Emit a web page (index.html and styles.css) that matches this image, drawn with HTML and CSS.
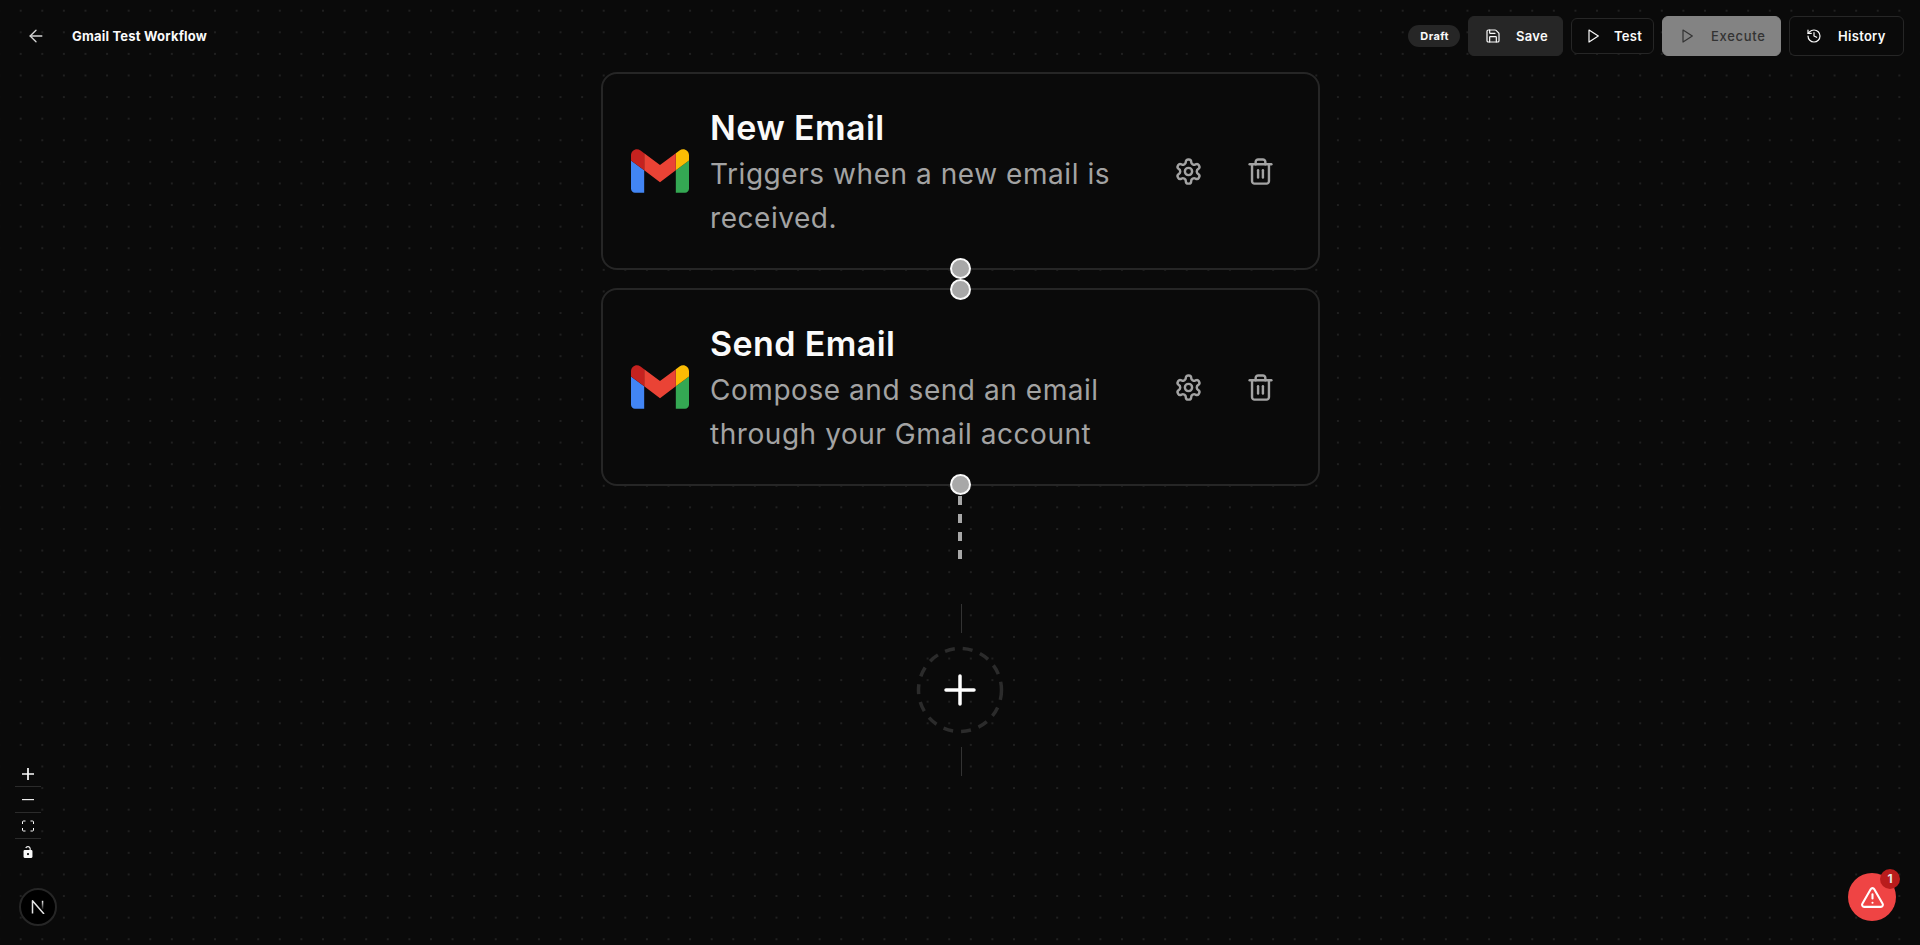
FILE: index.html
```html
<!DOCTYPE html>
<html lang="en">
<head>
  <meta charset="UTF-8" />
  <meta name="viewport" content="width=device-width, initial-scale=1.0"/>
  <title>Gmail Test Workflow</title>
  <link rel="stylesheet" href="styles.css">
</head>
<body>
  <div class="canvas">
    <header class="topbar">
      <div class="topbar-left">
        <svg class="back-icon" viewBox="0 0 24 24"><path d="m12 19-7-7 7-7"/><path d="M19 12H5"/></svg>
        <span class="workflow-name">Gmail Test Workflow</span>
      </div>
      <div class="topbar-right">
        <span class="badge">Draft</span>
        <button class="btn btn-save" type="button">
          <svg viewBox="0 0 24 24"><path d="M15.2 3a2 2 0 0 1 1.4.6l3.8 3.8a2 2 0 0 1 .6 1.4V19a2 2 0 0 1-2 2H5a2 2 0 0 1-2-2V5a2 2 0 0 1 2-2z"/><path d="M17 21v-7a1 1 0 0 0-1-1H8a1 1 0 0 0-1 1v7"/><path d="M7 3v4a1 1 0 0 0 1 1h7"/></svg>
          Save
        </button>
        <button class="btn btn-test" type="button">
          <svg viewBox="0 0 24 24"><polygon points="6 3 20 12 6 21 6 3"/></svg>
          Test
        </button>
        <button class="btn btn-execute" type="button">
          <svg viewBox="0 0 24 24"><polygon points="6 3 20 12 6 21 6 3"/></svg>
          Execute
        </button>
        <button class="btn btn-history" type="button">
          <svg viewBox="0 0 24 24"><path d="M3 12a9 9 0 1 0 9-9 9.75 9.75 0 0 0-6.74 2.74L3 8"/><path d="M3 3v5h5"/><path d="M12 7v5l4 2"/></svg>
          History
        </button>
      </div>
    </header>

    <div class="node node-first">
      <svg class="gmail-logo" viewBox="52 42 88 66"><path fill="#4285f4" d="M58 108h14V74L52 59v43c0 3.32 2.69 6 6 6"/><path fill="#34a853" d="M120 108h14c3.32 0 6-2.69 6-6V59l-20 15"/><path fill="#fbbc04" d="M120 48v26l20-15v-8c0-7.42-8.47-11.65-14.4-7.2"/><path fill="#ea4335" d="M72 74V48l24 18 24-18v26L96 92"/><path fill="#c5221f" d="M52 51v8l20 15V48l-5.6-4.2c-5.94-4.45-14.4-.22-14.4 7.2"/></svg>
      <div class="node-text">
        <h3>New Email</h3>
        <p>Triggers when a new email is received.</p>
      </div>
      <div class="node-actions">
        <svg viewBox="0 0 24 24"><path d="M12.22 2h-.44a2 2 0 0 0-2 2v.18a2 2 0 0 1-1 1.73l-.43.25a2 2 0 0 1-2 0l-.15-.08a2 2 0 0 0-2.73.73l-.22.38a2 2 0 0 0 .73 2.73l.15.1a2 2 0 0 1 1 1.72v.51a2 2 0 0 1-1 1.74l-.15.09a2 2 0 0 0-.73 2.73l.22.38a2 2 0 0 0 2.73.73l.15-.08a2 2 0 0 1 2 0l.43.25a2 2 0 0 1 1 1.73V20a2 2 0 0 0 2 2h.44a2 2 0 0 0 2-2v-.18a2 2 0 0 1 1-1.73l.43-.25a2 2 0 0 1 2 0l.15.08a2 2 0 0 0 2.73-.73l.22-.39a2 2 0 0 0-.73-2.73l-.15-.08a2 2 0 0 1-1-1.74v-.5a2 2 0 0 1 1-1.74l.15-.09a2 2 0 0 0 .73-2.73l-.22-.38a2 2 0 0 0-2.73-.73l-.15.08a2 2 0 0 1-2 0l-.43-.25a2 2 0 0 1-1-1.73V4a2 2 0 0 0-2-2z"/><circle cx="12" cy="12" r="3"/></svg>
        <svg viewBox="0 0 24 24"><path d="M3 6h18"/><path d="M19 6v14c0 1-1 2-2 2H7c-1 0-2-1-2-2V6"/><path d="M8 6V4c0-1 1-2 2-2h4c1 0 2 1 2 2v2"/><line x1="10" x2="10" y1="11" y2="17"/><line x1="14" x2="14" y1="11" y2="17"/></svg>
      </div>
    </div>

    <div class="node node-second">
      <svg class="gmail-logo" viewBox="52 42 88 66"><path fill="#4285f4" d="M58 108h14V74L52 59v43c0 3.32 2.69 6 6 6"/><path fill="#34a853" d="M120 108h14c3.32 0 6-2.69 6-6V59l-20 15"/><path fill="#fbbc04" d="M120 48v26l20-15v-8c0-7.42-8.47-11.65-14.4-7.2"/><path fill="#ea4335" d="M72 74V48l24 18 24-18v26L96 92"/><path fill="#c5221f" d="M52 51v8l20 15V48l-5.6-4.2c-5.94-4.45-14.4-.22-14.4 7.2"/></svg>
      <div class="node-text">
        <h3>Send Email</h3>
        <p>Compose and send an email through your Gmail account</p>
      </div>
      <div class="node-actions">
        <svg viewBox="0 0 24 24"><path d="M12.22 2h-.44a2 2 0 0 0-2 2v.18a2 2 0 0 1-1 1.73l-.43.25a2 2 0 0 1-2 0l-.15-.08a2 2 0 0 0-2.73.73l-.22.38a2 2 0 0 0 .73 2.73l.15.1a2 2 0 0 1 1 1.72v.51a2 2 0 0 1-1 1.74l-.15.09a2 2 0 0 0-.73 2.73l.22.38a2 2 0 0 0 2.73.73l.15-.08a2 2 0 0 1 2 0l.43.25a2 2 0 0 1 1 1.73V20a2 2 0 0 0 2 2h.44a2 2 0 0 0 2-2v-.18a2 2 0 0 1 1-1.73l.43-.25a2 2 0 0 1 2 0l.15.08a2 2 0 0 0 2.73-.73l.22-.39a2 2 0 0 0-.73-2.73l-.15-.08a2 2 0 0 1-1-1.74v-.5a2 2 0 0 1 1-1.74l.15-.09a2 2 0 0 0 .73-2.73l-.22-.38a2 2 0 0 0-2.73-.73l-.15.08a2 2 0 0 1-2 0l-.43-.25a2 2 0 0 1-1-1.73V4a2 2 0 0 0-2-2z"/><circle cx="12" cy="12" r="3"/></svg>
        <svg viewBox="0 0 24 24"><path d="M3 6h18"/><path d="M19 6v14c0 1-1 2-2 2H7c-1 0-2-1-2-2V6"/><path d="M8 6V4c0-1 1-2 2-2h4c1 0 2 1 2 2v2"/><line x1="10" x2="10" y1="11" y2="17"/><line x1="14" x2="14" y1="11" y2="17"/></svg>
      </div>
    </div>

    <span class="handle handle-a"></span>
    <span class="handle handle-b"></span>
    <span class="handle handle-c"></span>
    <div class="dash-line"></div>

    <div class="add-group">
      <span class="add-stem"></span>
      <svg class="add-circle" viewBox="0 0 88 88">
        <circle class="add-ring" cx="44" cy="44" r="41.5"/>
        <path class="add-plus" d="M30 44h28M44 30v28"/>
      </svg>
      <span class="add-stem"></span>
    </div>

    <div class="flow-controls">
      <button class="ctrl" type="button"><svg viewBox="0 0 32 32"><path d="M32 18.3H18.3V32h-4.6V18.3H0v-4.6h13.7V0h4.6v13.7H32z"/></svg></button>
      <button class="ctrl" type="button"><svg viewBox="0 0 32 5"><path d="M0 0h32v3H0z"/></svg></button>
      <button class="ctrl" type="button"><svg class="ctrl-fit" viewBox="0 0 24 22"><path d="M1 7V3a2 2 0 0 1 2-2h4M17 1h4a2 2 0 0 1 2 2v4M23 15v4a2 2 0 0 1-2 2h-4M7 21H3a2 2 0 0 1-2-2v-4"/></svg></button>
      <button class="ctrl" type="button"><svg viewBox="0 0 25 32"><path d="M21.300 10.700h-1.500V7.600C19.800 3.400 16.400 0 12.200 0a7.600 7.600 0 0 0-7.100 4.900l2.900 1.100a4.500 4.500 0 0 1 8.700 1.600v3.100H3.700A3.100 3.100 0 0 0 .6 13.800v15.100A3.100 3.100 0 0 0 3.700 32h17.600a3.100 3.100 0 0 0 3.100-3.100V13.800a3.100 3.100 0 0 0-3.100-3.100zM12.500 24.400a3 3 0 1 1 0-6 3 3 0 0 1 0 6z"/></svg></button>
    </div>

    <div class="next-badge">
      <svg viewBox="0 0 14 14"><defs><linearGradient id="next-fade" x1="0" y1="0" x2="0" y2="1"><stop offset="0" stop-color="#f5f5f5"/><stop offset="1" stop-color="#f5f5f5" stop-opacity="0.1"/></linearGradient></defs><path d="M1.500 13.500V.8L13 14"/><rect class="next-stem" x="10.800" y=".8" width="1.500" height="8.500" fill="url(#next-fade)"/></svg>
    </div>

    <div class="alert-btn">
      <svg viewBox="0 0 24 24"><path d="m21.730 18-8-14a2 2 0 0 0-3.480 0l-8 14A2 2 0 0 0 4 21h16a2 2 0 0 0 1.730-3"/><path d="M12 9v4"/><path d="M12 17h.01"/></svg>
      <span class="alert-count">1</span>
    </div>
  </div>
</body>
</html>
```

FILE: styles.css
```css
:root {
  --bg: #0a0a0a;
  --border: #262626;
  --muted: #a3a3a3;
  --light: #fafafa;
}

html, body {
  margin: 0;
  padding: 0;
  width: 100%;
  height: 100%;
  overflow: hidden;
  background: var(--bg);
  font-family: 'Inter', 'Liberation Sans', sans-serif;
  color: var(--light);
}

svg {
  fill: none;
  stroke: currentColor;
  stroke-width: 2;
  stroke-linecap: round;
  stroke-linejoin: round;
}

.canvas {
  position: relative;
  width: 100%;
  height: 100%;
  background-color: var(--bg);
  background-image: radial-gradient(circle, #202020 0.8px, transparent 1px);
  background-size: 21.6px 21.6px;
  background-position: 9.9px -0.1px;
}

/* top bar */
.topbar {
  display: flex;
  justify-content: space-between;
  align-items: center;
  padding: 16px 16px 0 26px;
}

.topbar-left {
  display: flex;
  align-items: center;
  gap: 26px;
}

.back-icon {
  width: 20px;
  height: 20px;
  color: #d4d4d4;
  stroke-width: 1.6;
}

.workflow-name {
  font-size: 13px;
  font-weight: 700;
  letter-spacing: 0.2px;
}

.topbar-right {
  display: flex;
  align-items: center;
  gap: 8px;
}

.badge {
  background: #262626;
  border-radius: 999px;
  padding: 0 11px 0 12px;
  height: 22px;
  line-height: 22px;
  font-size: 11px;
  font-weight: 700;
  letter-spacing: 0.4px;
}

.btn {
  display: flex;
  align-items: center;
  height: 40px;
  padding: 0 0 0 16px;
  border: 1px solid var(--border);
  border-radius: 6px;
  background: var(--bg);
  color: var(--light);
  font-family: inherit;
  font-size: 13px;
  font-weight: 600;
  letter-spacing: 0.3px;
  gap: 16px;
  box-sizing: border-box;
}

.btn svg {
  width: 16px;
  height: 16px;
  stroke-width: 1.8;
  flex: none;
}

.btn-save {
  width: 95px;
  background: #262626;
  border-color: #262626;
  gap: 15px;
}

.btn-test {
  width: 83px;
  height: 36px;
  padding-left: 13px;
  gap: 13px;
}

.btn-execute {
  width: 119px;
  background: #838383;
  border-color: #838383;
  color: #333;
  font-weight: 500;
  letter-spacing: 0.7px;
}

.btn-history {
  width: 115px;
}

/* workflow nodes */
.node {
  position: absolute;
  left: 601px;
  width: 719px;
  height: 198px;
  box-sizing: border-box;
  display: flex;
  align-items: center;
  padding: 0 0 0 28px;
  background: var(--bg);
  border: 2px solid var(--border);
  border-radius: 16px;
}

.node-first {
  top: 72px;
}

.node-second {
  top: 288px;
}

.gmail-logo {
  width: 58px;
  height: 44px;
  flex: none;
  stroke: none;
}

.node-text {
  width: 420px;
  margin-left: 21px;
  padding-top: 4px;
  flex: none;
}

.node-text h3 {
  margin: 0 0 2px;
  font-size: 34px;
  line-height: 44px;
  font-weight: 600;
  letter-spacing: 0.4px;
  color: var(--light);
}

.node-text p {
  margin: 0;
  font-size: 28px;
  line-height: 44px;
  font-weight: 400;
  letter-spacing: 0.55px;
  color: var(--muted);
}

.node-actions {
  display: flex;
  gap: 43px;
  margin-left: 44px;
  color: var(--muted);
}

.node-actions svg {
  width: 29px;
  height: 29px;
}

/* connectors */
.handle {
  position: absolute;
  left: 949.5px;
  width: 17px;
  height: 17px;
  box-sizing: content-box;
  background: #a8a8a8;
  border: 2px solid #fafafa;
  border-radius: 50%;
}

.handle-a {
  top: 258px;
}

.handle-b {
  top: 279px;
}

.handle-c {
  top: 473.5px;
}

.dash-line {
  position: absolute;
  left: 958px;
  top: 496px;
  width: 4px;
  height: 64px;
  background: repeating-linear-gradient(to bottom, #a8a8a8 0 9px, transparent 9px 18px);
}

.add-group {
  position: absolute;
  left: 916px;
  top: 604px;
  width: 88px;
  display: flex;
  flex-direction: column;
  align-items: center;
  gap: 13px;
}

.add-stem {
  width: 1px;
  height: 29px;
  margin-left: 2px;
  background: #333;
}

.add-circle {
  width: 88px;
  height: 88px;
  stroke: none;
}

.add-ring {
  stroke: #2b2b2b;
  stroke-width: 3.5;
  stroke-linecap: butt;
  stroke-dasharray: 10 8;
}

.add-plus {
  stroke: #fff;
  stroke-width: 3.5;
}

/* bottom left */
.flow-controls {
  position: absolute;
  left: 15px;
  top: 761px;
  width: 26px;
  display: flex;
  flex-direction: column;
}

.ctrl {
  display: flex;
  align-items: center;
  justify-content: center;
  height: 26px;
  padding: 0;
  background: var(--bg);
  border: none;
  border-bottom: 1px solid #2b2b2b;
  color: #fafafa;
}

.ctrl:last-child {
  border-bottom: none;
}

.ctrl svg {
  width: 12px;
  height: 12px;
  fill: currentColor;
  stroke: none;
}

.ctrl .ctrl-fit {
  fill: none;
  stroke: currentColor;
  stroke-width: 2;
  stroke-linecap: butt;
}

.next-badge {
  position: absolute;
  left: 19px;
  top: 888px;
  width: 38px;
  height: 38px;
  box-sizing: border-box;
  display: flex;
  align-items: center;
  justify-content: center;
  background: #000;
  border: 2px solid #262626;
  border-radius: 50%;
  color: #e5e5e5;
}

.next-badge svg {
  width: 14px;
  height: 14px;
  stroke-width: 1.5;
  stroke-linecap: butt;
}

.next-stem {
  stroke: none;
}

/* alert */
.alert-btn {
  position: absolute;
  left: 1848px;
  top: 873px;
  width: 48px;
  height: 48px;
  display: flex;
  align-items: center;
  justify-content: center;
  background: #ef4444;
  border-radius: 50%;
  color: #fff;
}

.alert-btn svg {
  width: 25px;
  height: 25px;
}

.alert-count {
  position: absolute;
  top: -4px;
  right: -4px;
  width: 20px;
  height: 20px;
  line-height: 20px;
  text-align: center;
  font-size: 12px;
  font-weight: 700;
  background: #b91c1c;
  border-radius: 50%;
  color: #e5e5e5;
}
```
